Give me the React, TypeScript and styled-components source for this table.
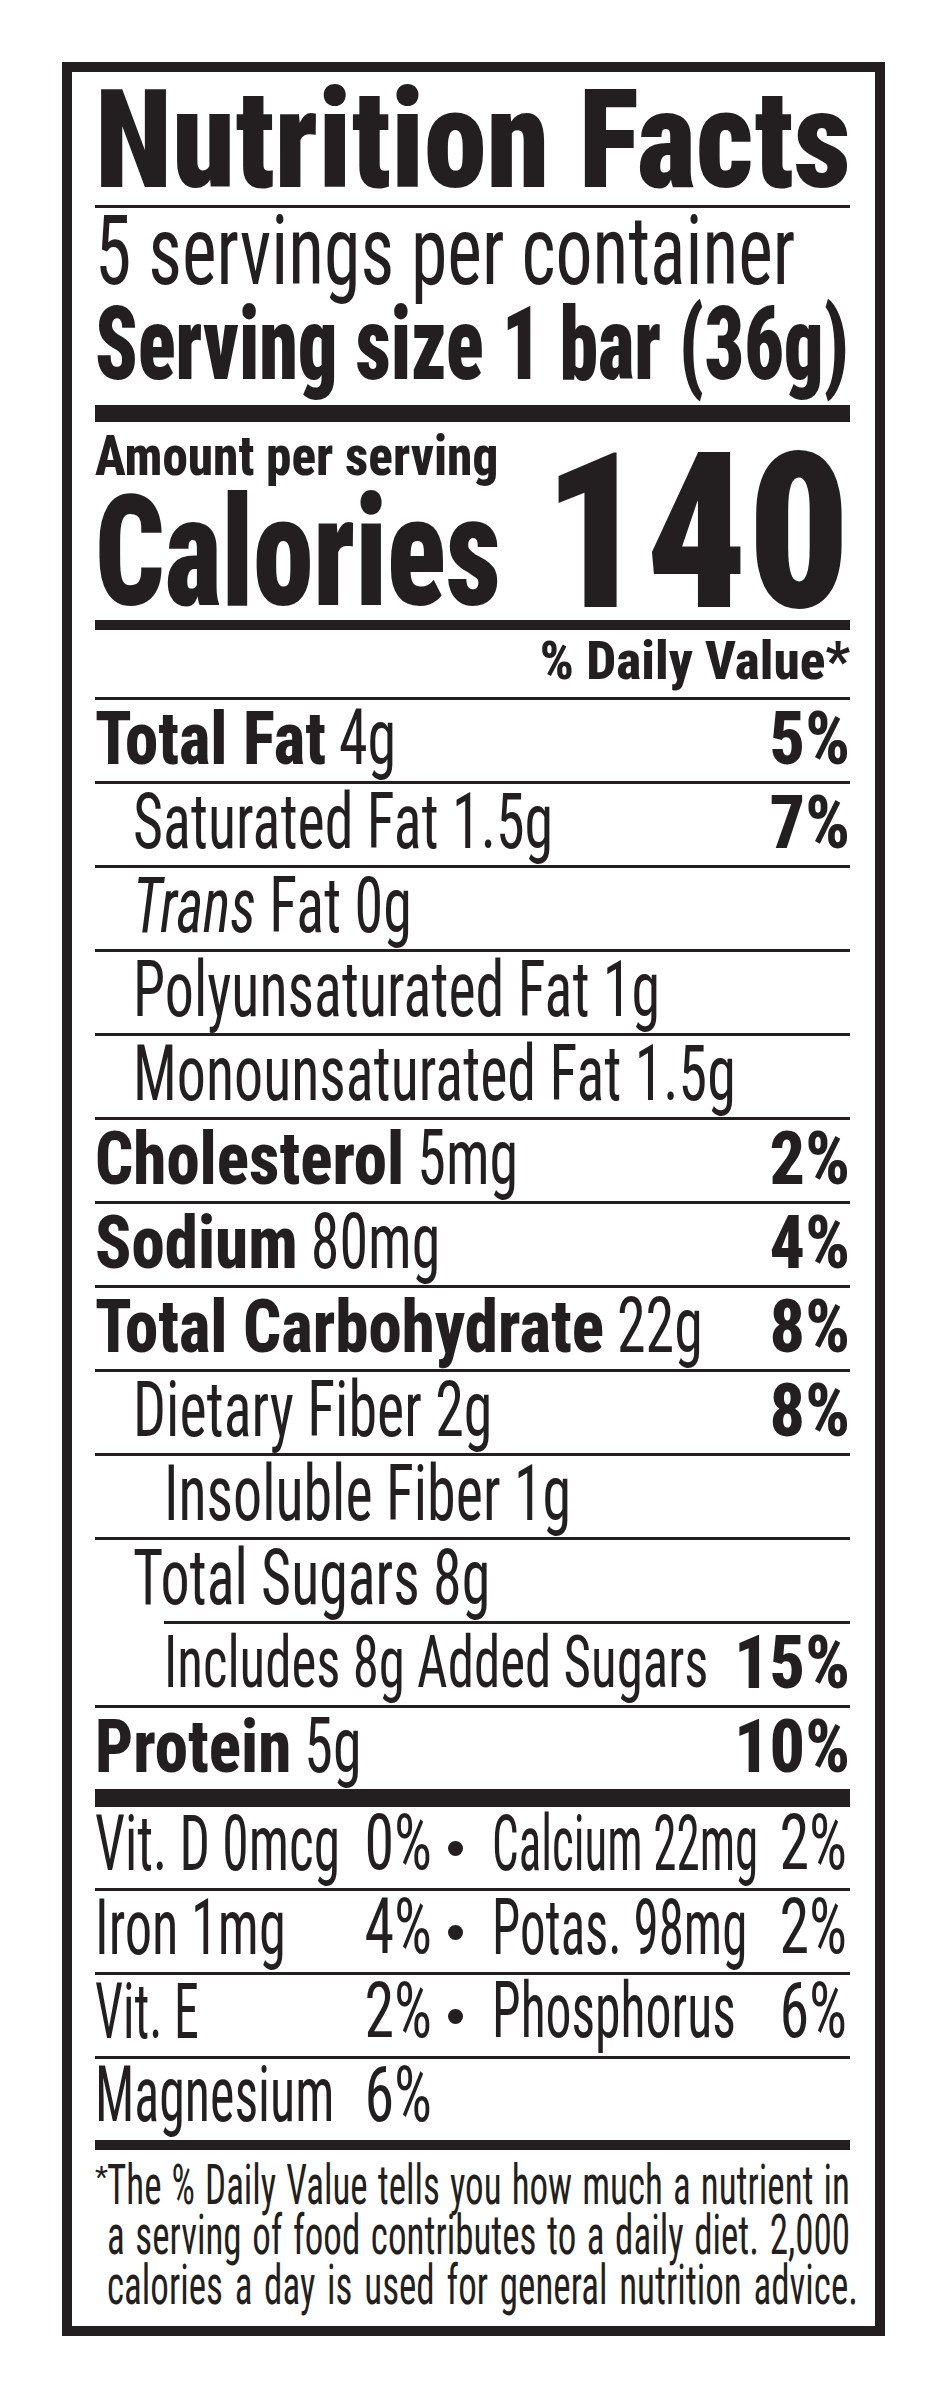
import React from "react";
import styled, { createGlobalStyle } from "styled-components";

const INK = "#231f20";
const ASC = 0.842; // baseline position inside a line-height:1 box, in em
const CAP = 0.711; // cap height of Roboto, in em

const GlobalStyle = createGlobalStyle`
  html, body { margin: 0; padding: 0; background: #ffffff; }
  body { font-family: Roboto, "Liberation Sans", sans-serif; }
`;

const Page = styled.div`
  padding: 62px 0 0 62px;
`;

const Label = styled.section`
  box-sizing: border-box;
  width: 823px;
  height: 2274px;
  border: 10px solid ${INK};
  padding: 0 25px 0 23px;
  color: ${INK};
  font-family: Roboto, "Liberation Sans", sans-serif;
  font-stretch: 75%;
  font-size: 0;
  display: flex;
  flex-direction: column;
`;

/* A run of text: font-size sets its width, scaleY stretches it to the label's tall, narrow letterforms. */
const Tx = styled.span<{ $size: number; $v?: number; $w?: number; $base?: number }>`
  display: inline-block;
  font-size: ${(p) => p.$size}px;
  font-weight: ${(p) => p.$w ?? 400};
  line-height: 1;
  white-space: nowrap;
  margin-top: ${(p) => (p.$base !== undefined ? `calc(${p.$base}px - ${ASC}em)` : `calc(var(--base) - ${ASC}em)`)};
  transform: scaleY(${(p) => p.$v ?? 1});
  transform-origin: 0 ${ASC}em;
`;

const Ital = styled.em`
  font-style: italic;
`;

const Line = styled.div<{ $h: number; $base: number; $end?: boolean }>`
  --base: ${(p) => p.$base}px;
  height: ${(p) => p.$h}px;
  display: flex;
  align-items: flex-start;
  justify-content: ${(p) => (p.$end ? "flex-end" : "flex-start")};
  flex-shrink: 0;
`;

const Rule = styled.div<{ $indent?: number }>`
  height: 3px;
  margin-left: ${(p) => p.$indent ?? 0}px;
  background: ${INK};
  flex-shrink: 0;
`;

const Bar = styled.div<{ $h: number }>`
  height: ${(p) => p.$h}px;
  background: ${INK};
  flex-shrink: 0;
`;

const CalSection = styled.div`
  height: 198px;
  display: grid;
  grid-template-columns: 1fr auto;
  align-items: start;
  flex-shrink: 0;
`;

const CalCell = styled.div<{ $col: number }>`
  grid-row: 1;
  grid-column: ${(p) => p.$col};
  display: flex;
  justify-content: ${(p) => (p.$col === 2 ? "flex-end" : "flex-start")};
`;

const NutRow = styled.div<{ $indent: number }>`
  --base: 64px;
  height: 81px;
  padding-left: ${(p) => p.$indent}px;
  display: flex;
  align-items: flex-start;
  justify-content: space-between;
  flex-shrink: 0;
`;

const NameGroup = styled.div`
  display: flex;
  align-items: flex-start;
  gap: 13px;
`;

const VitRow = styled.div`
  --base: 63px;
  height: 81px;
  display: grid;
  grid-template-columns: 337px 60px 1fr;
  align-items: start;
  flex-shrink: 0;
`;

const VitHalf = styled.div<{ $pr?: number }>`
  display: flex;
  align-items: flex-start;
  justify-content: space-between;
  padding-right: ${(p) => p.$pr ?? 0}px;
`;

const Dot = styled.span`
  display: block;
  width: 15px;
  height: 15px;
  border-radius: 50%;
  background: ${INK};
  margin: calc(var(--base) - 29px) 0 0 16px;
`;

const Footnote = styled.div`
  height: 176px;
  padding-top: 4px;
  box-sizing: border-box;
  display: flex;
  flex-shrink: 0;
`;

const Star = styled.div`
  width: 12px;
  flex-shrink: 0;
`;

const FootLines = styled.div`
  flex: 1;
  min-width: 0;
`;

const FootLine = styled.div<{ $over?: number }>`
  height: 50px;
  box-sizing: border-box;
  padding-top: calc(50px - ${ASC}em);
  margin-right: ${(p) => -(p.$over ?? 0)}px;
  font-size: 37px;
  font-weight: 400;
  line-height: 1;
  text-align: justify;
  text-align-last: justify;
  transform: scaleY(1.48);
  transform-origin: 0 50px;
`;

type Nutrient = {
  name: string;
  italic?: string;
  amount?: string;
  pct?: string;
  bold?: boolean;
  indent: number;
  small?: boolean;
  ruleIndent?: number;
  last?: boolean;
};

const nutrients: Nutrient[] = [
  { name: "Total Fat", amount: "4g", pct: "5%", bold: true, indent: 0 },
  { name: "Saturated Fat 1.5g", pct: "7%", indent: 38 },
  { name: "Fat 0g", italic: "Trans", indent: 38 },
  { name: "Polyunsaturated Fat 1g", indent: 38 },
  { name: "Monounsaturated Fat 1.5g", indent: 38 },
  { name: "Cholesterol", amount: "5mg", pct: "2%", bold: true, indent: 0 },
  { name: "Sodium", amount: "80mg", pct: "4%", bold: true, indent: 0 },
  { name: "Total Carbohydrate", amount: "22g", pct: "8%", bold: true, indent: 0 },
  { name: "Dietary Fiber 2g", pct: "8%", indent: 38 },
  { name: "Insoluble Fiber 1g", indent: 69 },
  { name: "Total Sugars 8g", indent: 38, ruleIndent: 69 },
  { name: "Includes 8g Added Sugars", pct: "15%", indent: 69, small: true },
  { name: "Protein", amount: "5g", pct: "10%", bold: true, indent: 0, last: true },
];

type Mineral = { name: string; size: number; pct: string };

const vitaminRows: [Mineral, Mineral][] = [
  [
    { name: "Vit. D 0mcg", size: 53.5, pct: "0%" },
    { name: "Calcium 22mg", size: 47, pct: "2%" },
  ],
  [
    { name: "Iron 1mg", size: 54.5, pct: "4%" },
    { name: "Potas. 98mg", size: 51, pct: "2%" },
  ],
  [
    { name: "Vit. E", size: 50, pct: "2%" },
    { name: "Phosphorus", size: 51.7, pct: "6%" },
  ],
];

const magnesium: Mineral = { name: "Magnesium", size: 52, pct: "6%" };

const VIT_CAP = 55;

function MineralCell({ m, pr }: { m: Mineral; pr?: number }) {
  return (
    <VitHalf $pr={pr}>
      <Tx $size={m.size} $v={VIT_CAP / (CAP * m.size)}>{m.name}</Tx>
      <Tx $size={60} $v={VIT_CAP / (CAP * 60)}>{m.pct}</Tx>
    </VitHalf>
  );
}

function NutrientRow({ n }: { n: Nutrient }) {
  return (
    <>
      <NutRow $indent={n.indent}>
        {n.bold ? (
          <NameGroup>
            <Tx $size={67} $v={1.11} $w={850}>{n.name}</Tx>
            {n.amount && <Tx $size={58} $v={1.334}>{n.amount}</Tx>}
          </NameGroup>
        ) : (
          <Tx $size={n.small ? 53 : 58} $v={n.small ? 1.38 : 1.334}>
            {n.italic && (
              <>
                <Ital>{n.italic}</Ital>{" "}
              </>
            )}
            {n.name}
          </Tx>
        )}
        {n.pct && (
          <Tx $size={70} $v={1.065} $w={850}>
            {n.pct}
          </Tx>
        )}
      </NutRow>
      {!n.last && <Rule $indent={n.ruleIndent} />}
    </>
  );
}

export default function App() {
  return (
    <>
      <GlobalStyle />
      <Page>
        <Label>
          <Line $h={133} $base={116}>
            <Tx $size={126.7} $v={1.088} $w={900}>Nutrition Facts</Tx>
          </Line>
          <Rule />
          <Line $h={94} $base={77}>
            <Tx $size={73.8} $v={1.296}>5 servings per container</Tx>
          </Line>
          <Line $h={103} $base={78}>
            <Tx $size={77.9} $v={1.318} $w={900}>Serving size 1 bar (36g)</Tx>
          </Line>
          <Bar $h={17} />

          <CalSection>
            <CalCell $col={1}>
              <Tx $size={51.2} $v={1.071} $w={850} $base={53}>Amount per serving</Tx>
            </CalCell>
            <CalCell $col={1}>
              <Tx $size={121.7} $v={1.271} $w={900} $base={183}>Calories</Tx>
            </CalCell>
            <CalCell $col={2}>
              <Tx $size={200} $v={1.09} $w={900} $base={185}>140</Tx>
            </CalCell>
          </CalSection>
          <Bar $h={10} />

          <Line $h={67} $base={50} $end>
            <Tx $size={53.3} $v={1.0} $w={850}>% Daily Value*</Tx>
          </Line>
          <Rule />

          {nutrients.map((n) => (
            <NutrientRow key={n.name} n={n} />
          ))}
          <Bar $h={18} />

          {vitaminRows.map(([a, b]) => (
            <React.Fragment key={a.name}>
              <VitRow>
                <MineralCell m={a} />
                <div>
                  <Dot />
                </div>
                <MineralCell m={b} pr={3} />
              </VitRow>
              <Rule />
            </React.Fragment>
          ))}
          <VitRow>
            <MineralCell m={magnesium} />
          </VitRow>
          <Bar $h={10} />

          <Footnote>
            <Star>
              <Tx $size={30} $base={33}>*</Tx>
            </Star>
            <FootLines>
              <FootLine>The % Daily Value tells you how much a nutrient in</FootLine>
              <FootLine>a serving of food contributes to a daily diet. 2,000</FootLine>
              <FootLine $over={8}>calories a day is used for general nutrition advice.</FootLine>
            </FootLines>
          </Footnote>
        </Label>
      </Page>
    </>
  );
}
